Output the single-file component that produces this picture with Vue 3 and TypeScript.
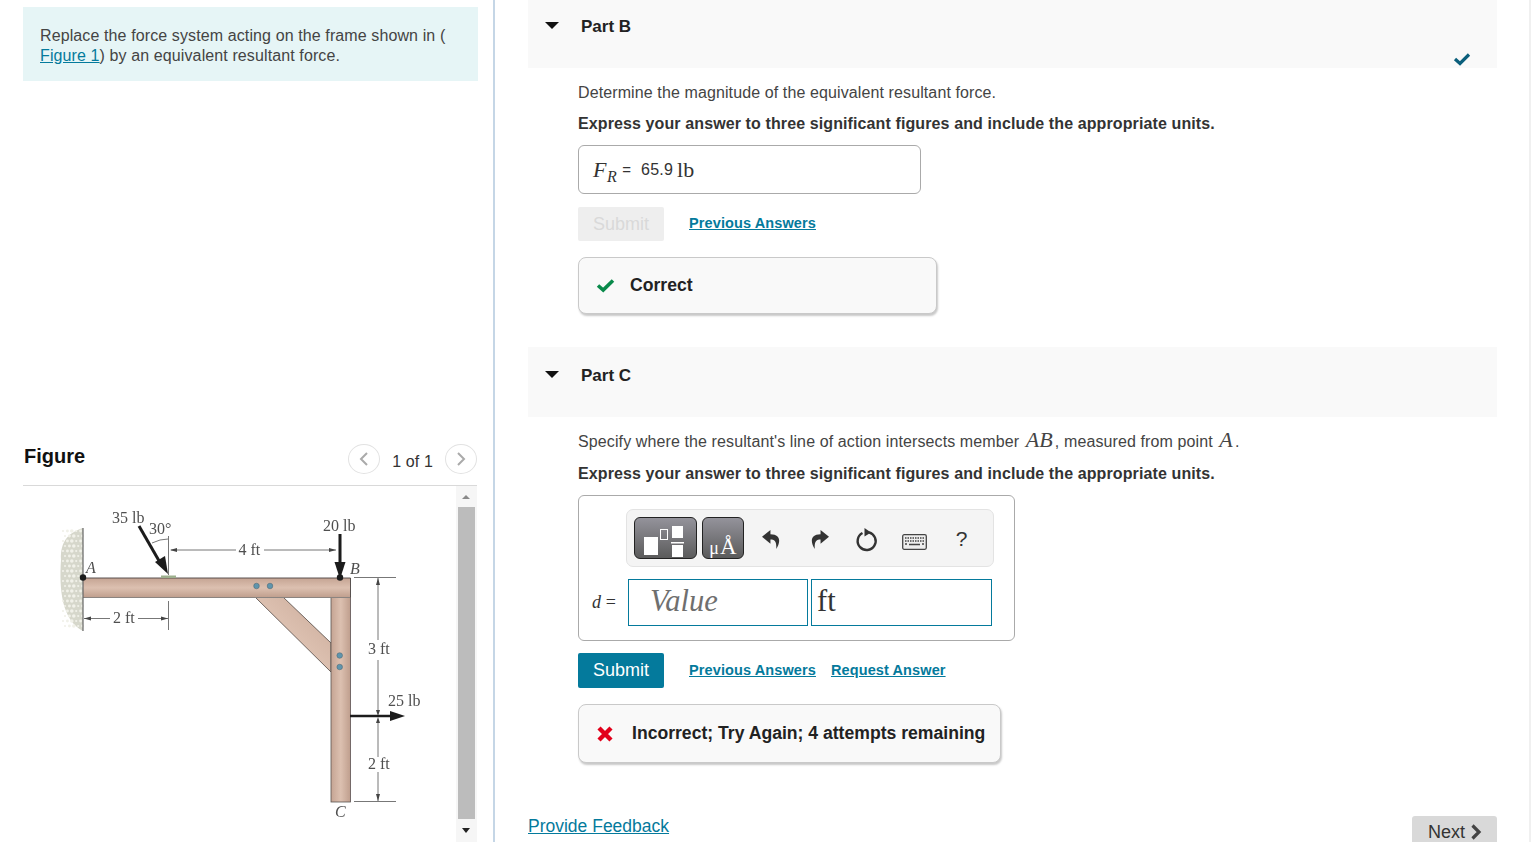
<script setup lang="ts">
const stipple: { x: number; y: number; r: number }[] = []
for (let row = 0; row < 20; row++) {
  for (let col = 0; col < 5; col++) {
    stipple.push({ x: 63 + col * 4.4 + (row % 2) * 2, y: 531 + row * 5, r: 1.1 + ((row * 3 + col) % 3) * 0.35 })
  }
}
</script>

<template>
  <div class="page">
    <aside class="left">
      <div class="prompt">
        <p>Replace the force system acting on the frame shown in (<br /><a class="inline-link">Figure 1</a>) by an equivalent resultant force.</p>
      </div>
      <div class="fig-head">
        <h2>Figure</h2>
        <div class="pager">
          <span class="circle">
            <svg width="12" height="16" viewBox="0 0 12 16"><path d="M9 2 3 8l6 6" fill="none" stroke="#aaa" stroke-width="2" /></svg>
          </span>
          <span class="count">1 of 1</span>
          <span class="circle">
            <svg width="12" height="16" viewBox="0 0 12 16"><path d="m3 2 6 6-6 6" fill="none" stroke="#aaa" stroke-width="2" /></svg>
          </span>
        </div>
      </div>
      <div class="fig-body">
        <svg class="diagram" width="433" height="356" viewBox="23 486 433 356">
          <defs>
            <linearGradient id="woodH" x1="0" y1="0" x2="0" y2="1">
              <stop offset="0" stop-color="#c5a493" />
              <stop offset="0.5" stop-color="#dcc0b0" />
              <stop offset="1" stop-color="#bf9e8d" />
            </linearGradient>
            <linearGradient id="woodV" x1="0" y1="0" x2="1" y2="0">
              <stop offset="0" stop-color="#c5a493" />
              <stop offset="0.5" stop-color="#dcc0b0" />
              <stop offset="1" stop-color="#bf9e8d" />
            </linearGradient>
            <linearGradient id="woodD" x1="0" y1="1" x2="1" y2="0">
              <stop offset="0" stop-color="#bf9e8d" />
              <stop offset="0.5" stop-color="#dcc0b0" />
              <stop offset="1" stop-color="#c9a998" />
            </linearGradient>
            <filter id="soft"><feGaussianBlur stdDeviation="0.5" /></filter>
            <filter id="softer"><feGaussianBlur stdDeviation="0.6" /></filter>
            <filter id="faint"><feGaussianBlur stdDeviation="0.3" /></filter>
          </defs>
          <g filter="url(#softer)">
            <path d="M83 528 C70 532 60 540 61 560 C59 590 62 620 83 631 Z" fill="#d6d7cb" />
            <circle v-for="(s, i) in stipple" :key="i" :cx="s.x" :cy="s.y" :r="s.r" fill="#f1f1e9" />
          </g>
          <g filter="url(#soft)">
            <polygon points="255,597 283,597 331,643 331,672" fill="url(#woodD)" stroke="#4f4540" stroke-width="0.8" />
            <rect x="331" y="597" width="19.5" height="205" fill="url(#woodV)" stroke="#5a5350" stroke-width="0.8" />
            <rect x="83" y="578" width="267.5" height="19.5" fill="url(#woodH)" />
            <path d="M83 578H350.5V597.5" fill="none" stroke="#4a4442" stroke-width="0.9" />
            <path d="M83 597.5H350" fill="none" stroke="#8b8480" stroke-width="1" />
            <rect x="161" y="575.5" width="15" height="2.5" fill="#9db08e" />
            <g fill="#5f95ad" stroke="#47606c" stroke-width="0.5">
              <circle cx="256.5" cy="586" r="2.8" />
              <circle cx="270" cy="586" r="2.8" />
              <circle cx="339.7" cy="655.5" r="2.8" />
              <circle cx="339.7" cy="667" r="2.8" />
            </g>
          </g>
          <g filter="url(#soft)" stroke="#777" stroke-width="1" fill="none">
            <path d="M83 528V631" stroke="#666" stroke-width="1.2" />
            <path d="M168.5 536V575M168.5 601V630" />
            <path d="M171 550H236M264 550H336" />
            <path d="M84 618.5H110M138 618.5H168" />
            <path d="M354 577.5H396M354 801.5H396" />
            <path d="M378 578V640M378 660V712M378 720V757M378 772V801" />
            <path d="M152 543Q160 539 168 539" />
          </g>
          <g fill="#444" filter="url(#soft)">
            <path d="M170 550l7-2v4zM336 550l-7-2v4zM84 618.5l7-2v4zM168 618.5l-7-2v4zM378 578l-2 7h4zM378 801l-2-7h4zM378 716l-2-6h4zM378 717l-2 6h4z" />
          </g>
          <g filter="url(#soft)">
            <path d="M139 526 162 566" stroke="#1c1c1c" stroke-width="3" />
            <polygon points="168,574 155,562 165,556" fill="#1c1c1c" />
            <path d="M340 534V564" stroke="#1c1c1c" stroke-width="3" />
            <polygon points="340,579 334.5,562 345.5,562" fill="#1c1c1c" />
            <path d="M350 716H394" stroke="#1c1c1c" stroke-width="2.6" />
            <polygon points="405,716 390,711 390,721" fill="#1c1c1c" />
            <circle cx="83" cy="577.5" r="3.2" fill="#1c1c1c" />
            <circle cx="340" cy="577.5" r="3.2" fill="#1c1c1c" />
          </g>
          <g class="dim" filter="url(#faint)">
            <text x="112" y="523">35 lb</text>
            <text x="149" y="534">30°</text>
            <text x="238.500" y="555">4 ft</text>
            <text x="113" y="623">2 ft</text>
            <text x="323" y="531">20 lb</text>
            <text x="368" y="654">3 ft</text>
            <text x="388" y="706">25 lb</text>
            <text x="368" y="769">2 ft</text>
            <text x="86" y="573" class="pt">A</text>
            <text x="350" y="574" class="pt">B</text>
            <text x="335" y="817" class="pt">C</text>
          </g>
        </svg>
        <div class="scroll">
          <span class="arrow up"></span>
          <span class="thumb"></span>
          <span class="arrow down"></span>
        </div>
      </div>
    </aside>

    <main class="right">
      <section class="part-head part-b">
        <span class="tri"></span>
        <h3>Part B</h3>
        <svg class="done" width="18" height="14" viewBox="0 0 18 14"><path d="M2 7l5 4.5L16 2.500" fill="none" stroke="#0b5f7c" stroke-width="3.2" /></svg>
      </section>
      <div class="body body-b">
        <p class="q">Determine the magnitude of the equivalent resultant force.</p>
        <p class="ins">Express your answer to three significant figures and include the appropriate units.</p>
        <div class="answer"><span class="math"><i>F</i><sub><i>R</i></sub></span><span class="eq">=</span><span class="val">65.9</span><span class="unit">lb</span></div>
        <div class="actions">
          <button class="submit off">Submit</button>
          <a class="act-link">Previous Answers</a>
        </div>
        <div class="result correct">
          <svg width="19" height="15" viewBox="0 0 19 15"><path d="M2 7.500l5.200 4.500L17 2.500" fill="none" stroke="#0a8a4b" stroke-width="3.600" /></svg>
          <span>Correct</span>
        </div>
      </div>

      <section class="part-head part-c">
        <span class="tri"></span>
        <h3>Part C</h3>
      </section>
      <div class="body body-c">
        <p class="q">Specify where the resultant's line of action intersects member <i class="mi">AB</i>, measured from point <i class="mi">A</i>.</p>
        <p class="ins">Express your answer to three significant figures and include the appropriate units.</p>
        <div class="card">
          <div class="toolbar">
            <button class="tb-btn wide" aria-label="templates">
              <svg width="61" height="40" viewBox="0 0 61 40">
                <rect x="9" y="19" width="14" height="18" fill="#fff" />
                <rect x="25.500" y="11.500" width="7" height="10" fill="none" stroke="#fff" stroke-width="1" />
                <rect x="37" y="8" width="11" height="12" fill="#fff" />
                <rect x="36" y="24" width="13" height="1.500" fill="#fff" />
                <rect x="37" y="27" width="11" height="12" fill="#fff" />
              </svg>
            </button>
            <button class="tb-btn units"><span class="mu">μ</span>Å</button>
            <span class="tool">
              <svg width="19" height="19" viewBox="0 0 18 18"><path d="M8 0 0 6.500 8 13V9c4 0 6 2 5.500 9C17 13 19 4 8 4Z" fill="#333" /></svg>
            </span>
            <span class="tool">
              <svg width="19" height="19" viewBox="0 0 18 18"><path d="M10 0l8 6.500L10 13V9c-4 0-6 2-5.500 9C1 13-1 4 10 4Z" fill="#333" /></svg>
            </span>
            <span class="tool">
              <svg width="24" height="24" viewBox="0 0 24 24"><path d="M14 4.300A9 9 0 1 1 7.500 5" fill="none" stroke="#333" stroke-width="2.400" /><path d="M9.500 0l6.500 4.500-6.500 4z" fill="#333" /></svg>
            </span>
            <span class="tool kbd">
              <svg width="25" height="16" viewBox="0 0 25 16">
                <rect x="0.700" y="0.700" width="23.600" height="14.600" rx="1.500" fill="#eee" stroke="#444" stroke-width="1.300" />
                <path d="M3 4H22M3 7H22" stroke="#444" stroke-width="1.500" stroke-dasharray="1.500 1" />
                <path d="M3 10H5M7 10.500H18M20 10H22" stroke="#444" stroke-width="1.500" />
              </svg>
            </span>
            <span class="tool help">?</span>
          </div>
          <div class="entry">
            <span class="d-label"><i>d</i> =</span>
            <span class="field value">Value</span>
            <span class="field unit-field">ft</span>
          </div>
        </div>
        <div class="actions active">
          <button class="submit">Submit</button>
          <a class="act-link">Previous Answers</a>
          <a class="act-link second">Request Answer</a>
        </div>
        <div class="result wrong">
          <svg width="18" height="18" viewBox="0 0 18 18"><path d="M3 3l12 12M15 3 3 15" fill="none" stroke="#e2001a" stroke-width="4.400" /></svg>
          <span>Incorrect; Try Again; 4 attempts remaining</span>
        </div>
      </div>
      <footer class="foot">
        <a class="feedback">Provide Feedback</a>
        <button class="next">Next
          <svg width="12" height="16" viewBox="0 0 12 16"><path d="M2.500 1.500 9 8l-6.500 6.500" fill="none" stroke="#444" stroke-width="3.200" /></svg>
        </button>
      </footer>
    </main>
    <div class="page-scroll"></div>
  </div>
</template>

<style>
html, body { margin: 0; overflow: hidden; background: #fff; }
</style>

<style scoped>
.page {
  display: flex;
  width: 1531px;
  height: 842px;
  overflow: hidden;
  background: #fff;
  color: #333;
  font-family: "Liberation Sans", Arial, sans-serif;
  font-size: 16px;
  letter-spacing: 0.11px;
}
p, h2, h3 { margin: 0; }
.left {
  box-sizing: border-box;
  flex: none;
  width: 495px;
  padding: 7px 16px 0 23px;
  border-right: 2px solid #c5d6e6;
  display: flex;
  flex-direction: column;
}
.prompt {
  box-sizing: border-box;
  height: 74px;
  margin-right: -1px;
  padding: 19px 17px 0;
  background: #e6f5f6;
  line-height: 20px;
}
.prompt p { color: #444; }
.inline-link { color: #047a9c; text-decoration: underline; }
.fig-head {
  box-sizing: border-box;
  height: 405px;
  flex: none;
  display: flex;
  align-items: flex-end;
  justify-content: space-between;
  padding-bottom: 11px;
  border-bottom: 1px solid #d9d9d9;
}
.fig-head h2 { font-size: 20px; line-height: 24px; color: #111; margin: 0 0 6px 1px; font-weight: 700; letter-spacing: 0; }
.pager { display: flex; align-items: center; }
.circle {
  box-sizing: border-box;
  width: 32px;
  height: 30px;
  border: 1px solid #e2e2e2;
  border-radius: 50%;
  display: flex;
  align-items: center;
  justify-content: center;
}
.count { margin: 6px 12px 0; color: #333; }
.fig-body { display: flex; height: 356px; flex: none; }
.diagram { display: block; flex: none; }
.dim text {
  font-family: "Liberation Serif", serif;
  font-size: 16px;
  fill: #4f4f4f;
  letter-spacing: 0;
}
.dim .pt { font-style: italic; }
.scroll {
  flex: none;
  width: 21px;
  background: #f6f6f6;
  display: flex;
  flex-direction: column;
  align-items: flex-start;
}
.thumb { display: block; width: 17px; margin-left: 2px; height: 312px; background: #bcbcbc; }
.arrow { display: block; width: 0; height: 0; border-left: 4px solid transparent; border-right: 4px solid transparent; margin-left: 6px; }
.arrow.up { border-bottom: 4px solid #8a8a8a; margin-top: 9px; margin-bottom: 8px; }
.arrow.down { border-top: 5px solid #222; margin-top: 9px; }

.right { flex: none; width: 969px; margin-left: 33px; display: flex; flex-direction: column; height: 842px; position: relative; }
.page-scroll { flex: none; width: 2px; margin-left: 32px; background: #f0f0f0; }
.part-head {
  box-sizing: border-box;
  position: relative;
  display: flex;
  background: #f9f9f9;
  flex: none;
}
.part-b { height: 68px; padding-top: 17px; }
.part-c { height: 70px; margin-top: 33px; padding-top: 19px; }
.tri {
  width: 0;
  height: 0;
  margin: 5px 0 0 17px;
  border-left: 7px solid transparent;
  border-right: 7px solid transparent;
  border-top: 7px solid #111;
}
.part-head h3 { margin-left: 22px; font-size: 17px; line-height: 20px; color: #222; letter-spacing: 0; }
.done { position: absolute; right: 26px; top: 52px; }
.body { padding-left: 50px; flex: none; }
.q { line-height: 20px; color: #444; }
.ins { line-height: 20px; font-weight: 700; color: #333; }
.body-b { padding-top: 15px; }
.body-b .ins { margin-top: 11px; }
.body-c { padding-top: 14px; }
.body-c .ins { margin-top: 12px; }
.mi { font-family: "Liberation Serif", serif; font-size: 22px; line-height: 18px; margin: 0 2px; }
.answer {
  box-sizing: border-box;
  width: 343px;
  height: 49px;
  margin-top: 11px;
  padding: 0 14px;
  border: 1px solid #aaa;
  border-radius: 6px;
  display: flex;
  align-items: center;
  color: #333;
}
.math { font-family: "Liberation Serif", serif; font-size: 22px; color: #333; letter-spacing: 0.5px; }
.math sub { font-size: 16px; line-height: 0; }
.eq { margin: 0 10px 0 5px; font-size: 15px; }
.val { font-size: 16px; letter-spacing: 0.2px; }
.unit { font-family: "Liberation Serif", serif; font-size: 22px; margin-left: 4px; }
.actions { display: flex; align-items: center; margin-top: 13px; }
.submit {
  box-sizing: border-box;
  width: 86px;
  height: 35px;
  padding: 0;
  border: 0;
  border-radius: 2px;
  background: #047a9c;
  color: #fff;
  font: 18px "Liberation Sans", Arial, sans-serif;
}
.submit.off { height: 34px; background: #eeeeee; color: #d9d9d9; }
.act-link { margin: 0 0 2px 25px; color: #047a9c; font-weight: 700; font-size: 14.5px; text-decoration: underline; }
.act-link.second { margin-left: 15px; }
.result {
  box-sizing: border-box;
  display: flex;
  align-items: center;
  margin-top: 16px;
  background: #f9f9f9;
  border: 1px solid #c9c9c9;
  border-radius: 8px;
  box-shadow: 1px 2px 2px #c9c9c9;
  font-weight: 700;
  font-size: 17.6px;
  letter-spacing: 0;
  color: #222;
}
.correct { width: 359px; height: 57px; padding-left: 17px; gap: 15px; }
.wrong { width: 423px; height: 59px; padding-left: 17px; gap: 18px; margin-top: 16px; }
.card {
  box-sizing: border-box;
  width: 437px;
  height: 146px;
  margin-top: 11px;
  padding: 13px 22px 0 13px;
  border: 1px solid #aaa;
  border-radius: 6px;
}
.toolbar {
  box-sizing: border-box;
  display: flex;
  align-items: center;
  width: 368px;
  height: 58px;
  margin-left: 34px;
  padding: 0 7px;
  background: #f4f4f4;
  border: 1px solid #e3e3e3;
  border-radius: 7px;
}
.tb-btn {
  box-sizing: border-box;
  flex: none;
  height: 42px;
  padding: 0;
  border: 1px solid #222;
  border-radius: 6px;
  background: linear-gradient(#94939b, #5b5b5b);
  color: #fff;
}
.tb-btn svg { display: block; }
.tb-btn.wide { width: 63px; }
.tb-btn.units {
  width: 42px;
  margin-left: 5px;
  margin-right: 4px;
  font: 23px/1 "Liberation Serif", serif;
  padding-top: 16px;
  overflow: hidden;
}
.mu { font-size: 18px; margin-right: 1px; }
.tool { flex: none; width: 47.5px; display: flex; justify-content: center; align-items: center; margin-top: 3px; }
.tool.kbd { margin-top: 7px; }
.help { font-size: 21px; color: #333; margin-top: 2px; }
.entry { display: flex; align-items: center; margin-top: 12px; }
.d-label { width: 36px; font-family: "Liberation Serif", serif; font-size: 18px; color: #333; flex: none; }
.field {
  box-sizing: border-box;
  height: 47px;
  padding-bottom: 2px;
  border: 1px solid #047a9c;
  display: flex;
  align-items: center;
  font-family: "Liberation Serif", serif;
  font-size: 30.5px;
  letter-spacing: 0;
}
.value { width: 180px; padding-left: 21px; font-style: italic; color: #6f6f6f; }
.unit-field { width: 181px; margin-left: 3px; padding-left: 5px; color: #333; }
.active { margin-top: 12px; }
.foot {
  position: relative;
  flex: none;
  display: flex;
  justify-content: space-between;
  margin-top: 50px;
  height: 29px;
}
.feedback { margin-top: 1px; color: #047a9c; text-decoration: underline; font-size: 17.5px; line-height: 24px; letter-spacing: 0; }
.next {
  box-sizing: border-box;
  width: 85px;
  height: 40px;
  margin-top: 3px;
  padding: 6px 0 0 1px;
  border: 0;
  border-radius: 3px 3px 0 0;
  background: #d9d9d9;
  color: #333;
  font: 18px "Liberation Sans", Arial, sans-serif;
  display: flex;
  justify-content: center;
  align-items: flex-start;
  gap: 5px;
}
.next svg { margin-top: 2px; }
</style>
